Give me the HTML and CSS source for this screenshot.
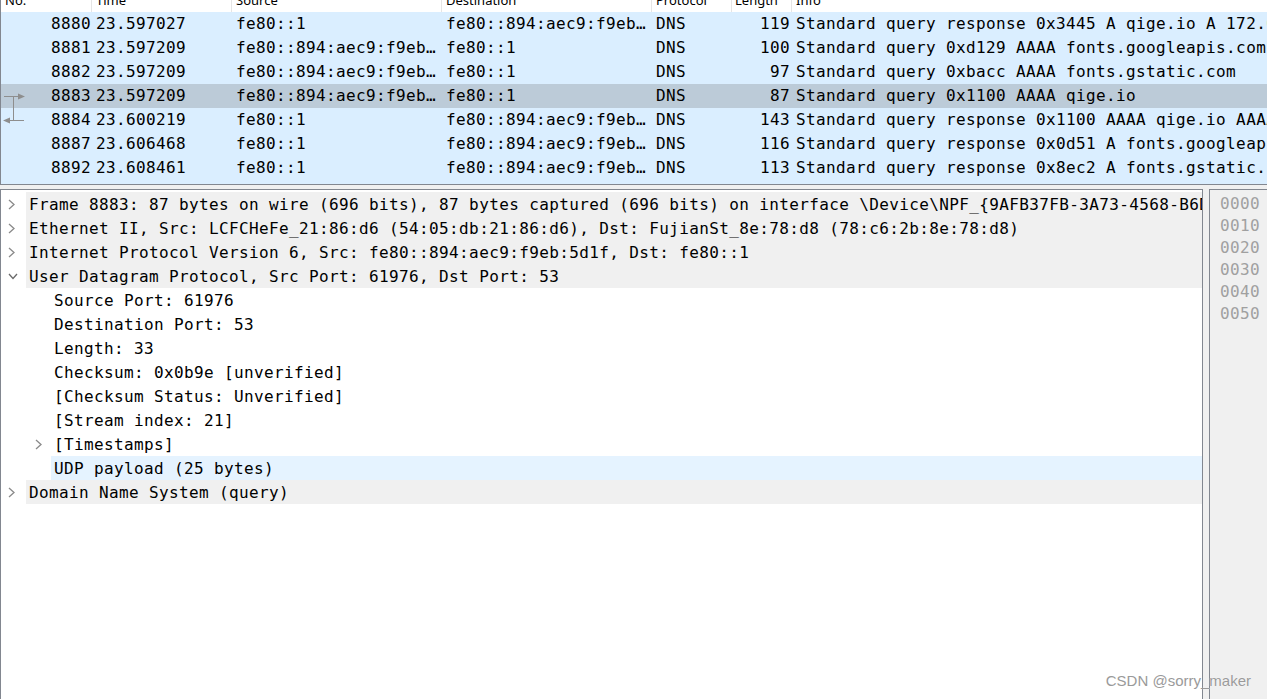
FILE: index.html
```html
<!DOCTYPE html>
<html>
<head>
<meta charset="utf-8">
<link rel="stylesheet" href="styles.css">
</head>
<body>
<div class="app">
  <div class="packet-list">
    <div class="plist-header">
      <div class="hdr-inner">
        <div class="col c-no hleft">No.</div>
        <div class="col c-time">Time</div>
        <div class="col c-src">Source</div>
        <div class="col c-dst">Destination</div>
        <div class="col c-proto">Protocol</div>
        <div class="col c-len hleft">Length</div>
        <div class="col c-info">Info</div>
      </div>
    </div>
    <div class="prow">
      <div class="col c-no">8880</div><div class="col c-time">23.597027</div><div class="col c-src">fe80::1</div><div class="col c-dst">fe80::894:aec9:f9eb:5d1f</div><div class="col c-proto">DNS</div><div class="col c-len">119</div><div class="col c-info">Standard query response 0x3445 A qige.io A 172.67.182.62 A 104.21.61.136</div>
    </div>
    <div class="prow">
      <div class="col c-no">8881</div><div class="col c-time">23.597209</div><div class="col c-src">fe80::894:aec9:f9eb:5d1f</div><div class="col c-dst">fe80::1</div><div class="col c-proto">DNS</div><div class="col c-len">100</div><div class="col c-info">Standard query 0xd129 AAAA fonts.googleapis.com</div>
    </div>
    <div class="prow">
      <div class="col c-no">8882</div><div class="col c-time">23.597209</div><div class="col c-src">fe80::894:aec9:f9eb:5d1f</div><div class="col c-dst">fe80::1</div><div class="col c-proto">DNS</div><div class="col c-len">97</div><div class="col c-info">Standard query 0xbacc AAAA fonts.gstatic.com</div>
    </div>
    <div class="prow selected">
      <div class="col c-no">8883</div><div class="col c-time">23.597209</div><div class="col c-src">fe80::894:aec9:f9eb:5d1f</div><div class="col c-dst">fe80::1</div><div class="col c-proto">DNS</div><div class="col c-len">87</div><div class="col c-info">Standard query 0x1100 AAAA qige.io</div>
    </div>
    <div class="prow">
      <div class="col c-no">8884</div><div class="col c-time">23.600219</div><div class="col c-src">fe80::1</div><div class="col c-dst">fe80::894:aec9:f9eb:5d1f</div><div class="col c-proto">DNS</div><div class="col c-len">143</div><div class="col c-info">Standard query response 0x1100 AAAA qige.io AAAA 2606:4700:3030::6815:3d88</div>
    </div>
    <div class="prow">
      <div class="col c-no">8887</div><div class="col c-time">23.606468</div><div class="col c-src">fe80::1</div><div class="col c-dst">fe80::894:aec9:f9eb:5d1f</div><div class="col c-proto">DNS</div><div class="col c-len">116</div><div class="col c-info">Standard query response 0x0d51 A fonts.googleapis.com A 142.251.42.234</div>
    </div>
    <div class="prow">
      <div class="col c-no">8892</div><div class="col c-time">23.608461</div><div class="col c-src">fe80::1</div><div class="col c-dst">fe80::894:aec9:f9eb:5d1f</div><div class="col c-proto">DNS</div><div class="col c-len">113</div><div class="col c-info">Standard query response 0x8ec2 A fonts.gstatic.com A 142.251.43.3</div>
    </div>
    <div class="prow">
      <div class="col c-no">8893</div><div class="col c-time">23.608512</div><div class="col c-src">fe80::1</div><div class="col c-dst">fe80::894:aec9:f9eb:5d1f</div><div class="col c-proto">DNS</div><div class="col c-len">113</div><div class="col c-info">Standard query response</div>
    </div>
    <svg class="related" width="26" height="40" viewBox="0 0 26 40">
      <line x1="3" y1="12.5" x2="19" y2="12.5" stroke="#8e8e8e" stroke-width="1"/>
      <polygon points="17,9.5 24,12.5 17,15.5" fill="#8e8e8e"/>
      <line x1="12.5" y1="12.5" x2="12.5" y2="36.5" stroke="#8e8e8e" stroke-width="1"/>
      <line x1="6" y1="36.5" x2="23" y2="36.5" stroke="#8e8e8e" stroke-width="1"/>
      <polygon points="9,33.5 2,36.5 9,39.5" fill="#8e8e8e"/>
    </svg>
  </div>

  <div class="lower">
    <div class="details">
      <div class="trow lvl0">
        <span class="twisty"><svg width="7" height="11" viewBox="0 0 7 11"><polyline points="1,1 6,5.5 1,10" fill="none" stroke="#8a8a8a" stroke-width="1.3"/></svg></span>
        <span class="label">Frame 8883: 87 bytes on wire (696 bits), 87 bytes captured (696 bits) on interface \Device\NPF_{9AFB37FB-3A73-4568-B6D1-5E1C3A0E9F42}, id 0</span>
      </div>
      <div class="trow lvl0">
        <span class="twisty"><svg width="7" height="11" viewBox="0 0 7 11"><polyline points="1,1 6,5.5 1,10" fill="none" stroke="#8a8a8a" stroke-width="1.3"/></svg></span>
        <span class="label">Ethernet II, Src: LCFCHeFe_21:86:d6 (54:05:db:21:86:d6), Dst: FujianSt_8e:78:d8 (78:c6:2b:8e:78:d8)</span>
      </div>
      <div class="trow lvl0">
        <span class="twisty"><svg width="7" height="11" viewBox="0 0 7 11"><polyline points="1,1 6,5.5 1,10" fill="none" stroke="#8a8a8a" stroke-width="1.3"/></svg></span>
        <span class="label">Internet Protocol Version 6, Src: fe80::894:aec9:f9eb:5d1f, Dst: fe80::1</span>
      </div>
      <div class="trow lvl0">
        <span class="twisty"><svg width="10" height="7" viewBox="0 0 10 7"><polyline points="1,1 5,5.5 9,1" fill="none" stroke="#6a6a6a" stroke-width="1.3"/></svg></span>
        <span class="label">User Datagram Protocol, Src Port: 61976, Dst Port: 53</span>
      </div>
      <div class="trow lvl1"><span class="twisty"></span><span class="label">Source Port: 61976</span></div>
      <div class="trow lvl1"><span class="twisty"></span><span class="label">Destination Port: 53</span></div>
      <div class="trow lvl1"><span class="twisty"></span><span class="label">Length: 33</span></div>
      <div class="trow lvl1"><span class="twisty"></span><span class="label">Checksum: 0x0b9e [unverified]</span></div>
      <div class="trow lvl1"><span class="twisty"></span><span class="label">[Checksum Status: Unverified]</span></div>
      <div class="trow lvl1"><span class="twisty"></span><span class="label">[Stream index: 21]</span></div>
      <div class="trow lvl1">
        <span class="twisty"><svg width="7" height="11" viewBox="0 0 7 11"><polyline points="1,1 6,5.5 1,10" fill="none" stroke="#8a8a8a" stroke-width="1.3"/></svg></span>
        <span class="label">[Timestamps]</span>
      </div>
      <div class="trow lvl1 hover"><span class="twisty"></span><span class="label">UDP payload (25 bytes)</span></div>
      <div class="trow lvl0">
        <span class="twisty"><svg width="7" height="11" viewBox="0 0 7 11"><polyline points="1,1 6,5.5 1,10" fill="none" stroke="#8a8a8a" stroke-width="1.3"/></svg></span>
        <span class="label">Domain Name System (query)</span>
      </div>
    </div>
    <div class="bytes">
      <div class="brow">0000</div>
      <div class="brow">0010</div>
      <div class="brow">0020</div>
      <div class="brow">0030</div>
      <div class="brow">0040</div>
      <div class="brow">0050</div>
    </div>
  </div>
  <div class="watermark">CSDN @sorry_maker</div>
</div>
</body>
</html>
```

FILE: styles.css
```css
html, body {
  margin: 0;
  padding: 0;
  background: #f0f0f0;
}
body {
  width: 1267px;
  height: 699px;
  overflow: hidden;
}
.app {
  position: relative;
  width: 1267px;
  height: 699px;
  display: flex;
  flex-direction: column;
  font-family: "DejaVu Sans Mono", "Liberation Mono", monospace;
  font-size: 16px;
  letter-spacing: 0.37px;
  color: #000;
}
.packet-list {
  position: relative;
  height: 184px;
  flex: none;
  background: #fff;
  border-left: 1px solid #828790;
  border-bottom: 1px solid #828790;
  overflow: hidden;
}
.plist-header {
  height: 12px;
  overflow: hidden;
  background: #fff;
}
.hdr-inner {
  display: flex;
  height: 24px;
  margin-top: -12px;
  font-family: "Noto Sans", "DejaVu Sans", sans-serif;
  font-size: 13px;
  letter-spacing: 0;
  line-height: 24px;
  color: #000;
}
.hdr-inner .col {
  border-right: 1px solid #e5e5e5;
  box-sizing: border-box;
  text-align: left;
}
.hdr-inner .c-no { padding-left: 4px; }
.hdr-inner .c-len { padding-left: 3px; }
.hdr-inner .c-info { border-right: none; }
.prow {
  display: flex;
  height: 24px;
  line-height: 24px;
  background: #daeeff;
  white-space: nowrap;
}
.prow.selected {
  background: #bccbd8;
}
.col {
  flex: none;
  overflow: hidden;
  white-space: nowrap;
  box-sizing: border-box;
}
.c-no { width: 91px; text-align: right; padding-right: 1px; }
.c-time { width: 140px; padding-left: 4px; }
.c-src { width: 210px; padding-left: 4px; padding-right: 4px; text-overflow: ellipsis; }
.c-dst { width: 210px; padding-left: 4px; padding-right: 4px; text-overflow: ellipsis; }
.c-proto { width: 80px; padding-left: 4px; }
.c-len { width: 60px; text-align: right; padding-right: 2px; }
.c-info { flex: 1; padding-left: 4px; text-overflow: clip; }
.related {
  position: absolute;
  left: 0;
  top: 84px;
}
.lower {
  flex: 1;
  display: flex;
  gap: 6px;
  margin-top: 4px;
  min-height: 0;
}
.details {
  width: 1203px;
  flex: none;
  box-sizing: border-box;
  background: #fff;
  border-left: 1px solid #828790;
  border-right: 1px solid #828790;
  border-top: 1px solid #828790;
  padding-top: 2px;
  overflow: hidden;
}
.trow {
  display: flex;
  height: 24px;
  line-height: 26px;
  white-space: nowrap;
}
.twisty {
  flex: none;
  width: 25px;
  box-sizing: border-box;
  display: flex;
  align-items: center;
  padding-left: 7px;
}
.twisty svg { display: block; }
.lvl1 { padding-left: 25px; }
.lvl1 .twisty { padding-left: 9px; }
.label {
  flex: 1;
  min-width: 0;
  height: 24px;
  overflow: hidden;
  padding-left: 3px;
}
.lvl0 .label { background: #f0f0f0; }
.hover .label { background: #e5f3ff; }
.bytes {
  flex: 1;
  background: #f0f0f0;
  border-left: 1px solid #828790;
  border-top: 1px solid #828790;
  padding-top: 3px;
  padding-left: 10px;
}
.brow {
  height: 22px;
  line-height: 22px;
  color: #a0a0a0;
}
.watermark {
  position: absolute;
  right: 16px;
  bottom: 10px;
  font-family: "Liberation Sans", Arial, sans-serif;
  font-size: 15px;
  letter-spacing: 0;
  color: #9a9a9a;
  text-shadow: 0 0 1px #fff;
}
```
